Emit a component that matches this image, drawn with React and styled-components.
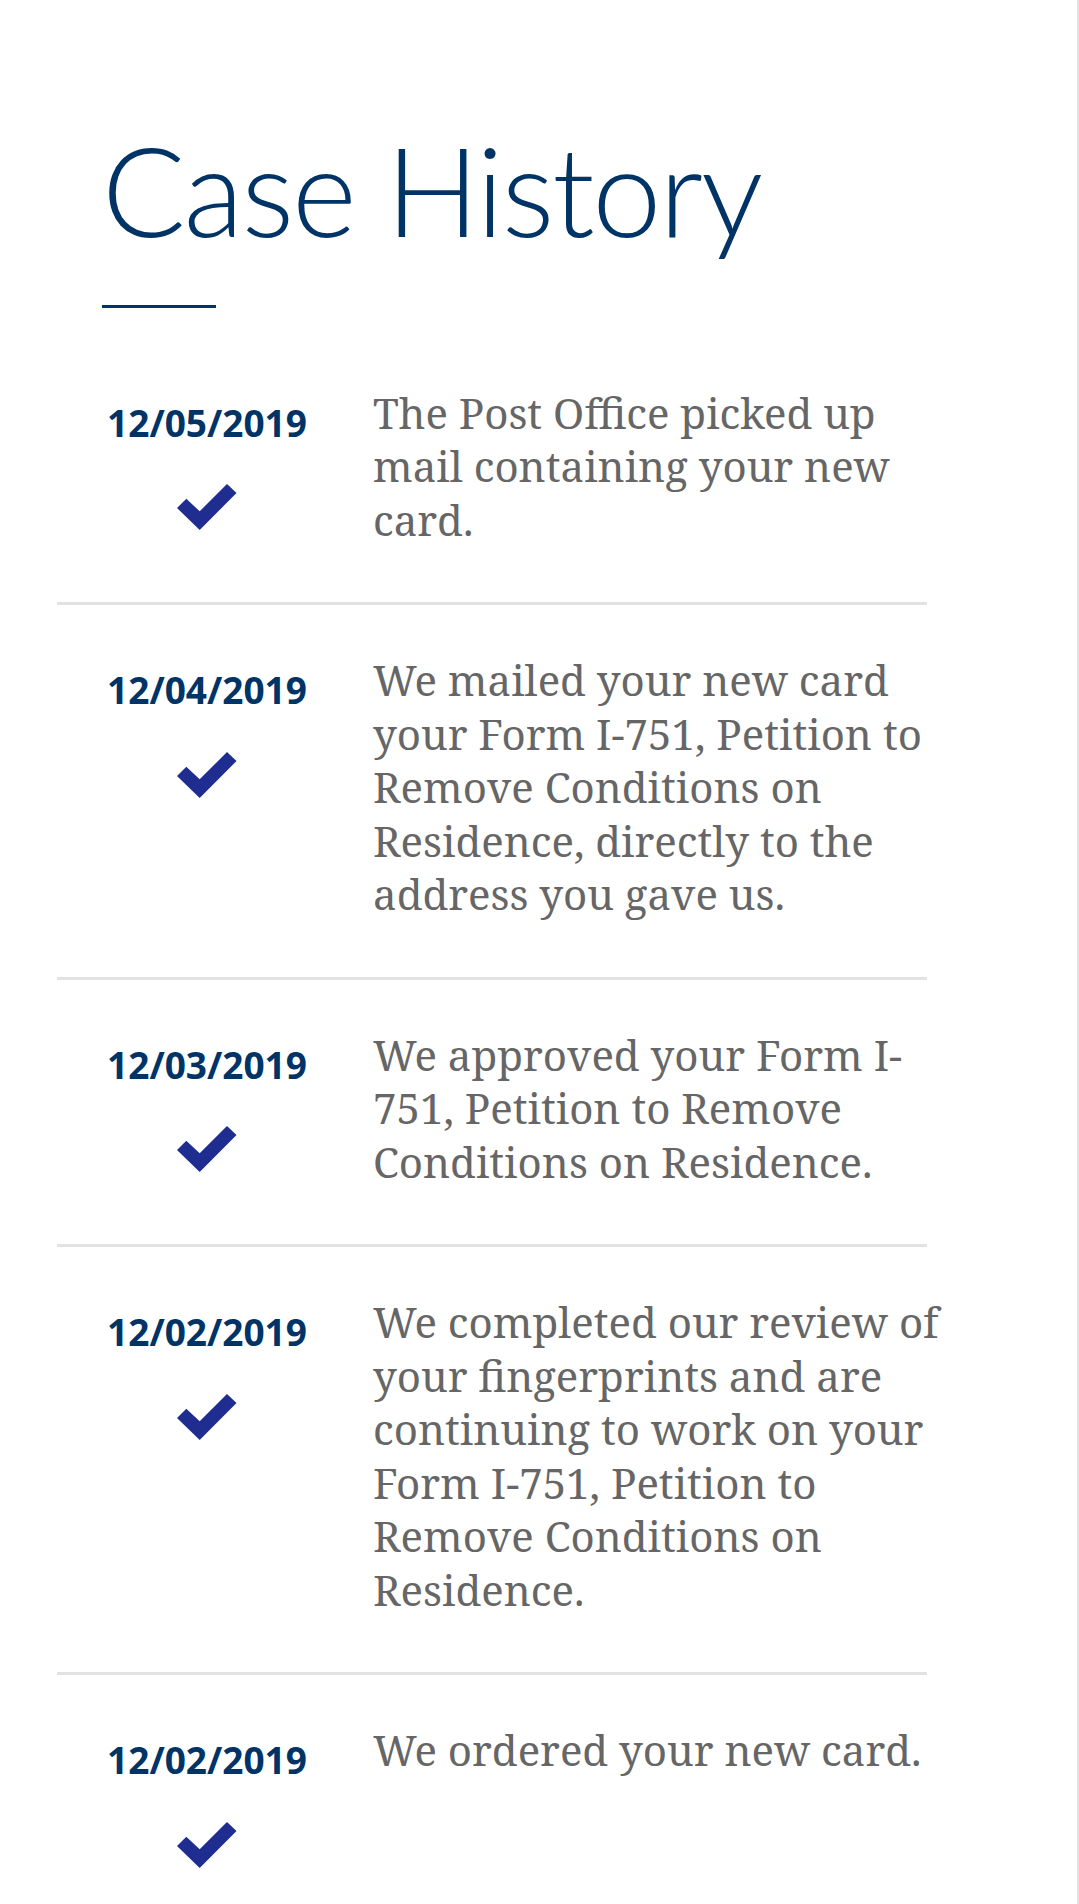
import React from 'react'
import styled, { createGlobalStyle } from 'styled-components'

const GlobalStyle = createGlobalStyle`
  body {
    margin: 0;
    background: #ffffff;
  }
`;

const Page = styled.div`
  width: 1079px;
  min-height: 1904px;
  box-sizing: border-box;
  border-right: 2px solid #e4e4e4;
  padding: 115px 0 0 57px;
  overflow: hidden;
`;

const Header = styled.div`
  padding-left: 45px;
`;

const Title = styled.h1`
  margin: 0;
  font-family: Lato, "Open Sans", sans-serif;
  font-weight: 300;
  font-size: 124px;
  line-height: 1.2;
  letter-spacing: -2.2px;
  color: #003366;
`;

const Rule = styled.div`
  width: 114px;
  height: 3px;
  margin-top: 41px;
  background-color: #003366;
`;

const List = styled.div`
  margin-top: 30px;
`;

const Row = styled.div`
  display: flex;
  width: 870px;
  padding: 48px 0 56px;
  border-bottom: 3px solid #e2e2e2;
`;

const DateCol = styled.div`
  width: 300px;
  flex-shrink: 0;
  display: flex;
  flex-direction: column;
  align-items: center;
`;

const DateText = styled.div`
  margin-top: 12px;
  font-family: "Open Sans", "Noto Sans", sans-serif;
  font-weight: 700;
  font-size: 37px;
  line-height: 1.362;
  color: #003366;
`;

const CheckIcon = styled.svg`
  display: block;
  margin-top: 36px;
  width: 60px;
  height: 46px;
`;

const Description = styled.div`
  margin-left: 16px;
  width: 576px;
  flex-shrink: 0;
  font-family: "Noto Serif", "DejaVu Serif", "Liberation Serif", serif;
  font-size: 42px;
  line-height: 53.5px;
  color: #666666;
`;

const history = [
  { date: '12/05/2019', text: 'The Post Office picked up mail containing your new card.' },
  { date: '12/04/2019', text: 'We mailed your new card your Form I-751, Petition to Remove Conditions on Residence, directly to the address you gave us.' },
  { date: '12/03/2019', text: 'We approved your Form I-751, Petition to Remove Conditions on Residence.' },
  { date: '12/02/2019', text: 'We completed our review of your fingerprints and are continuing to work on your Form I-751, Petition to Remove Conditions on Residence.' },
  { date: '12/02/2019', text: 'We ordered your new card.' },
];

const Check = () => (
  <CheckIcon viewBox="0 0 60 46">
    <polygon points="0,24 9.3,14.7 22.7,27.3 50,0 59.5,9 22.7,46" fill="#1e2d8f" />
  </CheckIcon>
);

const App = () => {
  return (
    <Page>
      <GlobalStyle />
      <Header>
        <Title>Case History</Title>
        <Rule />
      </Header>
      <List>
        {history.map((item, i) => (
          <Row key={i}>
            <DateCol>
              <DateText>{item.date}</DateText>
              <Check />
            </DateCol>
            <Description>{item.text}</Description>
          </Row>
        ))}
      </List>
    </Page>
  )
}

export default App
